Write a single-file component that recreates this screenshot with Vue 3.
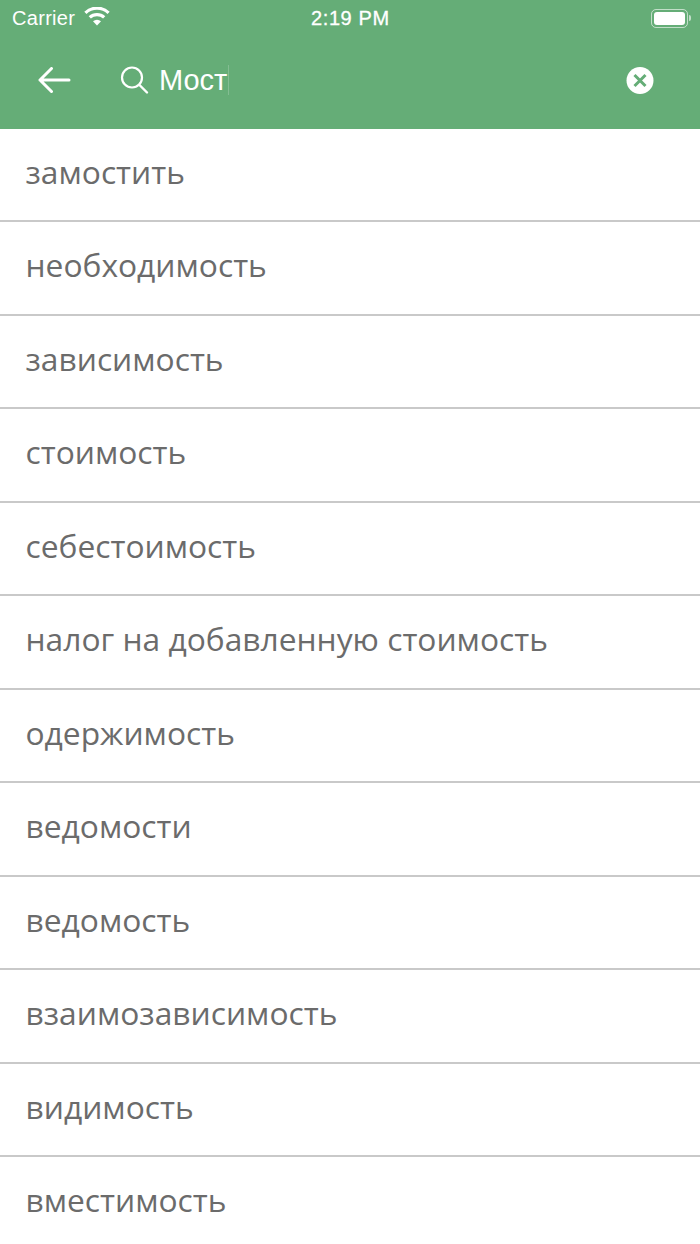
<template>
  <div class="searchPage">
    <!-- 顶部 -->
    <header class="topBar">
      <div class="statusBar">
        <div class="statusLeft">
          <span class="carrier">Carrier</span>
          <svg class="wifi" width="26" height="19" viewBox="0 0 26 19">
            <path d="M13 18.500 9 14.200a6 6 0 0 1 8 0Z" fill="#fff" />
            <path d="M5.800 10.400a10.500 10.500 0 0 1 14.400 0" fill="none" stroke="#fff" stroke-width="3.200" />
            <path d="M1.400 5.800a16.800 16.800 0 0 1 23.200 0" fill="none" stroke="#fff" stroke-width="3.200" />
          </svg>
        </div>
        <span class="clock">2:19 PM</span>
        <div class="battery">
          <div class="batteryBody"><div class="batteryFill"></div></div>
          <div class="batteryCap"></div>
        </div>
      </div>
      <div class="searchRow">
        <svg class="backIcon" width="34" height="28" viewBox="0 0 34 28">
          <path d="M32 13H3M14.500 1.500 3 13l11.500 11.500" fill="none" stroke="#fff" stroke-width="3" stroke-linecap="round" stroke-linejoin="round" />
        </svg>
        <svg class="searchIcon" width="30" height="30" viewBox="0 0 30 30">
          <circle cx="13" cy="11.500" r="10" fill="none" stroke="#fff" stroke-width="2.200" />
          <path d="M20.500 19 28 26.500" fill="none" stroke="#fff" stroke-width="2.400" stroke-linecap="round" />
        </svg>
        <span class="query">{{ query }}</span>
        <span class="caret"></span>
        <svg class="clearIcon" width="28" height="28" viewBox="0 0 28 28">
          <circle cx="14" cy="13.500" r="13.500" fill="#fff" />
          <path d="M8.500 8 19.500 19M19.500 8 8.500 19" fill="none" stroke="#65ad77" stroke-width="3" />
        </svg>
      </div>
    </header>

    <!-- 结果列表 -->
    <ul class="wordList">
      <li class="wordItem" v-for="word in words" :key="word">{{ word }}</li>
    </ul>
  </div>
</template>

<script setup>
const query = 'Мост'

const words = [
  'замостить',
  'необходимость',
  'зависимость',
  'стоимость',
  'себестоимость',
  'налог на добавленную стоимость',
  'одержимость',
  'ведомости',
  'ведомость',
  'взаимозависимость',
  'видимость',
  'вместимость'
]
</script>

<style>
html,
body {
  margin: 0;
  background: #fff;
}
</style>

<style scoped>
.searchPage {
  width: 700px;
  height: 1244px;
  overflow: hidden;
  background: #fff;
  font-family: 'Open Sans', 'Noto Sans', sans-serif;
}

.topBar {
  height: 129px;
  background: #65ad77;
  color: #fff;
}

.statusBar {
  height: 36px;
  padding: 0 9px 0 12px;
  display: flex;
  align-items: center;
  justify-content: space-between;
  position: relative;
  font-family: 'Liberation Sans', Arial, sans-serif;
  font-size: 20px;
}

.statusLeft {
  display: flex;
  align-items: center;
  gap: 9px;
}

.carrier {
  letter-spacing: 0.3px;
}

.wifi {
  margin-top: -3px;
}

.clock {
  position: absolute;
  left: 311px;
  top: 6px;
  line-height: 24px;
  -webkit-text-stroke: 0.3px #fff;
  letter-spacing: 0.6px;
}

.battery {
  display: flex;
  align-items: center;
  gap: 1px;
}

.batteryBody {
  width: 37px;
  height: 19px;
  box-sizing: border-box;
  padding: 2px;
  border: 1px solid rgba(255, 255, 255, 0.6);
  border-radius: 5px;
}

.batteryFill {
  height: 100%;
  background: #fff;
  border-radius: 3px;
}

.batteryCap {
  width: 2px;
  height: 6px;
  background: rgba(255, 255, 255, 0.6);
  border-radius: 0 2px 2px 0;
}

.searchRow {
  height: 90px;
  padding: 0 46px 0 37px;
  display: flex;
  align-items: center;
}

.backIcon {
  margin-right: 48px;
}

.searchIcon {
  margin-right: 10px;
}

.query {
  font-family: 'Liberation Sans', Arial, sans-serif;
  font-size: 29px;
  line-height: 40px;
  margin-top: -2px;
}

.caret {
  width: 1px;
  height: 30px;
  margin-left: 1px;
  margin-top: -2px;
  background: rgba(255, 255, 255, 0.2);
}

.clearIcon {
  margin-left: auto;
}

.wordList {
  list-style: none;
  margin: -0.5px 0 0;
  padding: 0;
}

.wordItem {
  height: 93.5px;
  box-sizing: border-box;
  padding: 0 25.5px 6px;
  display: flex;
  align-items: center;
  font-size: 31.75px;
  color: #6b6b6b;
  border-bottom: 2px solid #c9c9c9;
}
</style>
